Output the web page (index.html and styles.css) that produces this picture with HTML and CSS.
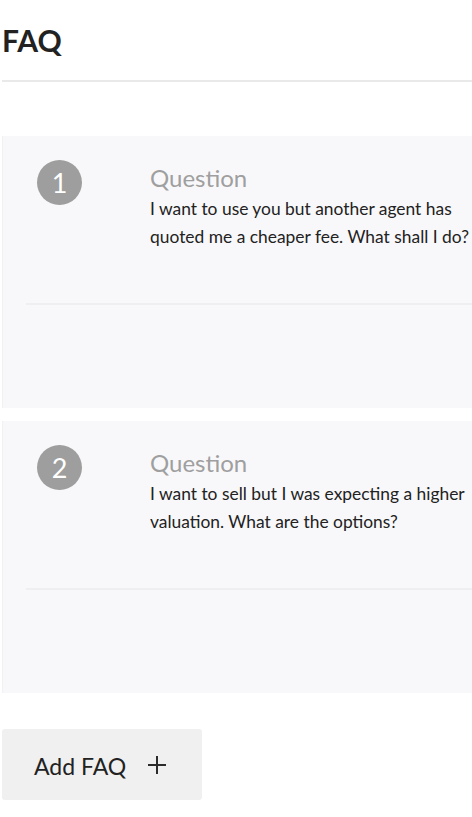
FILE: index.html
```html
<!DOCTYPE html>
<html lang="en">
<head>
  <meta charset="UTF-8">
  <title>FAQ</title>
  <link rel="stylesheet" href="styles.css">
</head>
<body>

  <div class="page">
    <header class="page-head">
      <h1>FAQ</h1>
    </header>

    <section class="faq-list">
      <div class="faq-card">
        <div class="faq-head">
          <div class="faq-num">1</div>
          <div class="faq-text">
            <div class="faq-label">Question</div>
            <p class="faq-question">I want to use you but another agent has quoted me a cheaper fee. What shall I do?</p>
          </div>
        </div>
        <div class="faq-answer"></div>
      </div>

      <div class="faq-card">
        <div class="faq-head">
          <div class="faq-num">2</div>
          <div class="faq-text">
            <div class="faq-label">Question</div>
            <p class="faq-question">I want to sell but I was expecting a higher valuation. What are the options?</p>
          </div>
        </div>
        <div class="faq-answer"></div>
      </div>
    </section>

    <button class="add-btn" type="button">
      <span>Add FAQ</span>
      <svg class="add-icon" width="18" height="18" viewBox="0 0 18 18">
        <path d="M9 0v18M0 9h18" stroke="#2b2b2b" stroke-width="2" fill="none"/>
      </svg>
    </button>
  </div>

</body>
</html>
```

FILE: styles.css
```css
html, body {
  overflow-x: hidden;
}

body {
  margin: 0;
  padding: 0;
  background-color: #fff;
  font-family: Lato, "Open Sans", Arial, sans-serif;
  color: #222;
}

.page {
  width: 490px;
  margin-left: 2px;
}

.page-head {
  padding-top: 22px;
  padding-bottom: 22px;
  border-bottom: 2px solid #e9e9e9;
}

.page-head h1 {
  margin: 0;
  font-size: 30px;
  font-weight: 700;
  line-height: 36px;
  color: #222;
}

.faq-list {
  margin-top: 54px;
  display: flex;
  flex-direction: column;
  gap: 13px;
}

.faq-card {
  background-color: #f8f8fa;
  border-left: 1px solid #f1f1f3;
  padding: 24px 0 0 23px;
  height: 248px;
}

.faq-head {
  display: flex;
  align-items: flex-start;
  padding-left: 11px;
  padding-bottom: 52px;
  border-bottom: 2px solid #efeff1;
}

.faq-num {
  flex: none;
  width: 45px;
  height: 45px;
  border-radius: 50%;
  background-color: #9e9e9e;
  color: #fff;
  font-size: 27px;
  font-weight: 400;
  line-height: 45px;
  text-align: center;
}

.faq-text {
  margin-left: 68px;
  padding-top: 4px;
}

.faq-label {
  font-size: 24px;
  line-height: 28px;
  color: #9f9f9f;
  margin-bottom: 3px;
}

.faq-question {
  margin: 0;
  font-size: 17.4px;
  line-height: 28px;
  color: #222;
}

.add-btn {
  margin-top: 36px;
  width: 200px;
  height: 71px;
  display: flex;
  align-items: center;
  gap: 22px;
  padding: 2px 0 0 32px;
  border: none;
  border-radius: 3px;
  background-color: #f0f0f0;
  font-family: Lato, "Open Sans", Arial, sans-serif;
  font-size: 23px;
  color: #222;
}

.add-icon {
  display: block;
  margin-top: -2px;
}
```
